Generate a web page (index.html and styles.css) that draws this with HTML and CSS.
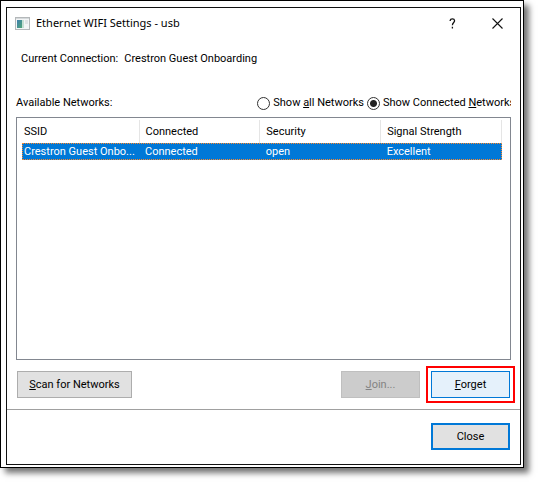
FILE: index.html
```html
<!DOCTYPE html>
<html lang="en">
<head>
<meta charset="utf-8">
<title>Ethernet WIFI Settings - usb</title>
<link rel="stylesheet" href="styles.css">
</head>
<body>
<div class="frame">
  <main class="dialog">
    <header class="titlebar">
      <svg class="app-icon" viewBox="0 0 15 13" aria-hidden="true">
        <defs><linearGradient id="pane" x1="0" y1="0" x2="1" y2="1"><stop offset="0" stop-color="#3f7fae"/><stop offset="1" stop-color="#4fa577"/></linearGradient></defs>
        <rect x=".5" y=".5" width="14" height="12" fill="#f3f5f6" stroke="#b4b8ba"/>
        <rect x="1" y="1" width="13" height="1" fill="#d5d9db"/>
        <rect x="2" y="3" width="5" height="8" fill="url(#pane)"/>
        <rect x="7" y="3" width="2" height="8" fill="#c5dfd3"/>
        <rect x="10" y="3" width="3" height="4" fill="#dfe3e5"/>
      </svg>
      <h1 class="title">Ethernet WIFI Settings - usb</h1>
      <button class="caption-button" type="button" aria-label="Help">
        <svg width="11" height="11" viewBox="0 0 11 11" fill="none" stroke="#111" stroke-width="1.3"><path d="M3.2 3V2.4Q3.4.9 5.4.9T7.6 2.8C7.6 4.4 5.4 4.6 5.4 7.2M5.4 8.8V10.6"/></svg>
      </button>
      <button class="caption-button" type="button" aria-label="Close window">
        <svg width="11" height="11" viewBox="0 0 11 11" stroke="#111" stroke-width="1.1"><path d="M.5.5l10 10M10.5.5l-10 10"/></svg>
      </button>
    </header>
    <p class="connection"><span>Current Connection:</span><span>Crestron Guest Onboarding</span></p>
    <div class="filters">
      <span class="filters-label" id="networks-label">Available Networks:</span>
      <label class="option"><input type="radio" name="show"><span>Show <u>a</u>ll Networks</span></label>
      <label class="option connected"><input type="radio" name="show" checked><span>Show Connected <u>N</u>etworks</span></label>
    </div>
    <div class="list">
      <table class="networks" aria-labelledby="networks-label">
        <thead><tr><th class="ssid">SSID</th><th>Connected</th><th>Security</th><th>Signal Strength</th></tr></thead>
        <tbody><tr class="selected"><td class="ssid">Crestron Guest Onbo...</td><td>Connected</td><td>open</td><td>Excellent</td></tr></tbody>
      </table>
    </div>
    <div class="actions">
      <button class="button scan" type="button"><u>S</u>can for Networks</button>
      <button class="button" type="button" disabled><u>J</u>oin...</button>
      <div class="highlight"><button class="button forget" type="button"><u>F</u>orget</button></div>
    </div>
    <footer class="footer">
      <button class="button close" type="button">Close</button>
    </footer>
  </main>
</div>
</body>
</html>
```
FILE: styles.css
```css
* { box-sizing: border-box; }

body {
  display: flex;
  height: 100vh;
  margin: 0;
  padding: 0 15px 15px 0;
  overflow: hidden;
  background: #fff;
  color: #000;
  font: 11px/14px Roboto, "Liberation Sans", sans-serif;
}

.frame {
  display: flex;
  flex: 1;
  min-width: 0;
  border: 1px solid #000;
  padding: 6px 2px 2px 5px;
  background: #fff;
  box-shadow: 5px 5px 6px rgba(0, 0, 0, .55);
}

.dialog {
  display: flex;
  flex: 1;
  flex-direction: column;
  min-width: 0;
  border: 1px solid #111;
}

.titlebar {
  display: flex;
  align-items: center;
  height: 30px;
  padding-left: 8px;
}

.app-icon { width: 15px; height: 13px; }

.title {
  flex: 1;
  margin: 0 0 0 6px;
  font: 11px/16px "Noto Sans", sans-serif;
}

.caption-button {
  display: flex;
  align-items: center;
  justify-content: center;
  width: 45px;
  height: 30px;
  border: 0;
  padding: 0;
  background: none;
}

.connection {
  display: flex;
  gap: 6px;
  margin: 14px 0 0 14px;
}

.filters {
  display: flex;
  align-items: center;
  gap: 3px;
  height: 14px;
  margin: 30px 9px 7px;
  white-space: nowrap;
}

.filters-label { flex: 1; }

.option {
  display: flex;
  align-items: center;
  gap: 3px;
}

.option input {
  appearance: none;
  flex: none;
  width: 13px;
  height: 13px;
  margin: 0;
  border: 1px solid #333;
  border-radius: 50%;
  background: #fff;
}

.option input:checked { background: radial-gradient(circle, #222 3px, #fff 4px); }

.connected {
  flex: 0 0 144px;
  overflow: hidden;
}

.list {
  flex: 1;
  margin: 0 9px;
  border: 1px solid #828790;
  padding: 2px 8px 2px 5px;
}

.networks {
  width: 100%;
  border-collapse: collapse;
  table-layout: fixed;
}

.networks th,
.networks td {
  overflow: hidden;
  padding: 0 0 0 6px;
  text-align: left;
  font-weight: inherit;
  white-space: nowrap;
}

.networks th { height: 23px; border-right: 1px solid #e5e5e5; }
.networks td { height: 17px; }
.networks .ssid { width: 117px; padding-left: 2px; }

.selected {
  outline: 1px dotted #ff8728;
  outline-offset: -1px;
  background: #0078d7;
  color: #fff;
}

.actions {
  display: flex;
  gap: 11px;
  padding: 11px 10px;
}

.button {
  width: 79px;
  height: 27px;
  border: 1px solid #adadad;
  padding: 0;
  background: #e1e1e1;
  color: #000;
  font: inherit;
}

.button:disabled {
  border-color: #bfbfbf;
  background: #ccc;
  color: #838383;
}

.scan { width: 115px; margin-right: auto; }

.highlight {
  margin: -5px;
  border: 2px solid #f00;
  padding: 3px;
}

.forget {
  border-color: #0078d7;
  background: #e5f1fb;
}

.footer {
  display: flex;
  justify-content: flex-end;
  border-top: 1px solid #a0a0a0;
  padding: 13px 10px 14px;
}

.close { border: 2px solid #0078d7; }
```
